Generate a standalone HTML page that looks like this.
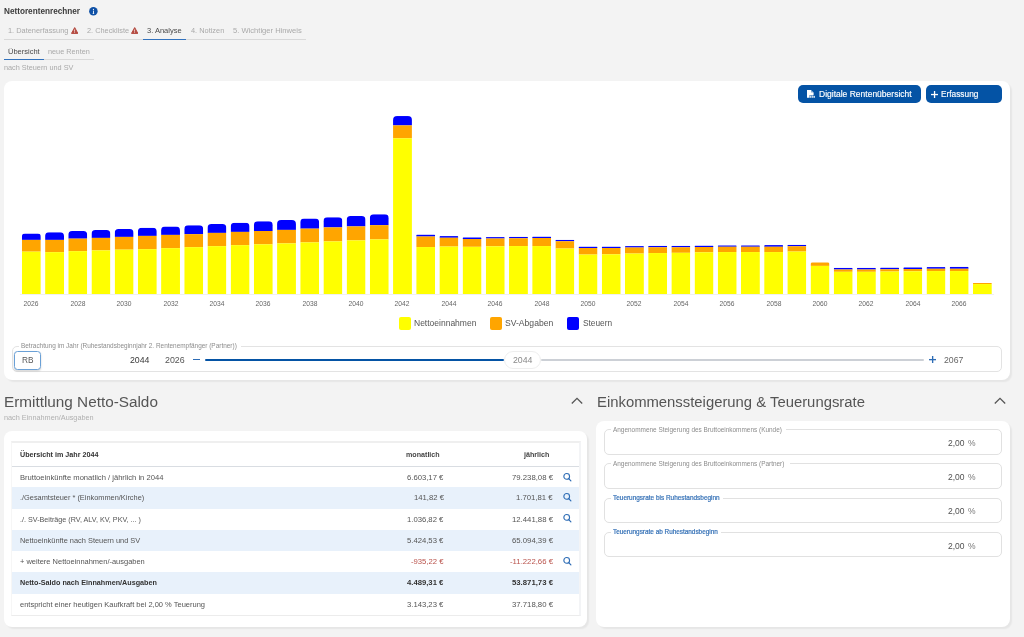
<!DOCTYPE html>
<html><head><meta charset="utf-8"><style>
html,body{margin:0;padding:0;}
body{width:1024px;height:637px;overflow:hidden;position:relative;background:#f3f3f3;font-family:"Liberation Sans",sans-serif;}
.t{position:absolute;white-space:nowrap;will-change:transform;}
</style></head><body>
<div class="t" style="left:3.75px;top:8.00px;font-size:8.2px;line-height:8.2px;font-weight:700;color:#3b3b3b;">Nettorentenrechner</div>
<svg style="position:absolute;left:89.3px;top:7.0px" width="9" height="9" viewBox="0 0 9 9"><circle cx="4.4" cy="4.3" r="4.25" fill="#0f51a6"/><rect x="4.0" y="3.6" width="0.85" height="3.2" fill="#fff"/><rect x="3.6" y="6.2" width="1.6" height="0.6" fill="#fff"/><circle cx="4.42" cy="2.4" r="0.55" fill="#fff"/></svg>
<div class="t" style="left:8.10px;top:27.00px;font-size:7.4px;line-height:7.4px;font-weight:400;color:#a9a9a9;">1. Datenerfassung</div>
<div class="t" style="left:86.90px;top:27.00px;font-size:7.35px;line-height:7.35px;font-weight:400;color:#a9a9a9;">2. Checkliste</div>
<div class="t" style="left:147.10px;top:27.00px;font-size:7.5px;line-height:7.5px;font-weight:400;color:#4b4b4b;">3. Analyse</div>
<div class="t" style="left:190.60px;top:27.00px;font-size:7.4px;line-height:7.4px;font-weight:400;color:#a9a9a9;">4. Notizen</div>
<div class="t" style="left:232.50px;top:27.00px;font-size:7.6px;line-height:7.6px;font-weight:400;color:#a9a9a9;">5. Wichtiger Hinweis</div>
<svg style="position:absolute;left:70.8px;top:26.9px" width="7.4" height="7" viewBox="0 0 7.4 7"><path d="M3.7 0.6 L6.9 6.4 L0.5 6.4 Z" fill="#b44a40" stroke="#b44a40" stroke-width="1" stroke-linejoin="round"/><rect x="3.35" y="2.5" width="0.7" height="2.2" fill="#fff"/><rect x="3.35" y="5.2" width="0.7" height="0.7" fill="#fff"/></svg>
<svg style="position:absolute;left:130.9px;top:26.9px" width="7.4" height="7" viewBox="0 0 7.4 7"><path d="M3.7 0.6 L6.9 6.4 L0.5 6.4 Z" fill="#b44a40" stroke="#b44a40" stroke-width="1" stroke-linejoin="round"/><rect x="3.35" y="2.5" width="0.7" height="2.2" fill="#fff"/><rect x="3.35" y="5.2" width="0.7" height="0.7" fill="#fff"/></svg>
<div style="position:absolute;left:3.75px;top:38.9px;width:302.5px;height:1px;background:#d9d9d9"></div>
<div style="position:absolute;left:142.9px;top:38.5px;width:43.1px;height:1.5px;background:#3272bd"></div>
<div class="t" style="left:7.75px;top:48.00px;font-size:7.5px;line-height:7.5px;font-weight:400;color:#4b4b4b;">Übersicht</div>
<div class="t" style="left:47.90px;top:48.00px;font-size:7.3px;line-height:7.3px;font-weight:400;color:#a9a9a9;">neue Renten</div>
<div style="position:absolute;left:3.5px;top:59.0px;width:90.25px;height:1px;background:#d9d9d9"></div>
<div style="position:absolute;left:3.5px;top:58.7px;width:40.25px;height:1.5px;background:#3272bd"></div>
<div class="t" style="left:3.50px;top:64.00px;font-size:7.3px;line-height:7.3px;font-weight:400;color:#aaaaaa;">nach Steuern und SV</div>
<div style="position:absolute;left:4px;top:81px;width:1006.2px;height:299px;background:#fff;border-radius:8px;box-shadow:2px 2px 1.5px rgba(0,0,0,0.055)"></div>
<div style="position:absolute;left:797.5px;top:85.2px;width:123.5px;height:17.9px;background:#0453a5;border-radius:5px"></div>
<div style="position:absolute;left:925.75px;top:85.2px;width:75.9px;height:17.9px;background:#0453a5;border-radius:5px"></div>
<svg style="position:absolute;left:807px;top:90px" width="9" height="8" viewBox="0 0 9 8"><path d="M0 0 H4 L6.6 2.6 V5.2 H2.4 V7.8 H0 Z" fill="#fff"/><path d="M4 0 V2.6 H6.6 Z" fill="#0453a5" opacity="0.45"/><rect x="2.6" y="5.6" width="1.5" height="2.2" fill="#fff" opacity="0.8"/><rect x="4.5" y="5.6" width="1.5" height="2.2" fill="#fff" opacity="0.8"/><rect x="6.4" y="5.9" width="1.5" height="1.9" fill="#fff" opacity="0.9"/></svg>
<div class="t" style="left:819.00px;top:90.00px;font-size:8.5px;line-height:8.5px;font-weight:400;color:#ffffff;-webkit-text-stroke:0.15px #fff">Digitale Rentenübersicht</div>
<svg style="position:absolute;left:931.4px;top:91.2px" width="7" height="7" viewBox="0 0 7 7"><rect x="2.9" y="0" width="1.3" height="7" fill="#fff"/><rect x="0" y="2.9" width="7" height="1.3" fill="#fff"/></svg>
<div class="t" style="left:941.00px;top:90.00px;font-size:8.3px;line-height:8.3px;font-weight:400;color:#ffffff;-webkit-text-stroke:0.15px #fff">Erfassung</div>
<svg style="position:absolute;left:0;top:0" width="1024" height="320" viewBox="0 0 1024 320"><rect x="19.9" y="294.00" width="974" height="0.6" fill="#e6e6e6"/><clipPath id="c0"><path d="M21.90,294.0 V236.70 Q21.90,233.50 25.10,233.50 H37.60 Q40.80,233.50 40.80,236.70 V294.0 Z"/></clipPath><g clip-path="url(#c0)"><rect x="21.90" y="233.50" width="18.9" height="6.40" fill="#0000ff"/><rect x="21.90" y="239.90" width="18.9" height="11.75" fill="#ffa500"/><rect x="21.90" y="251.65" width="18.9" height="42.35" fill="#ffff00"/></g><clipPath id="c1"><path d="M45.10,294.0 V236.07 Q45.10,232.25 48.92,232.25 H60.17 Q64.00,232.25 64.00,236.07 V294.0 Z"/></clipPath><g clip-path="url(#c1)"><rect x="45.10" y="232.25" width="18.9" height="7.65" fill="#0000ff"/><rect x="45.10" y="239.90" width="18.9" height="12.25" fill="#ffa500"/><rect x="45.10" y="252.15" width="18.9" height="41.85" fill="#ffff00"/></g><clipPath id="c2"><path d="M68.29,294.0 V234.82 Q68.29,231.00 72.12,231.00 H83.37 Q87.19,231.00 87.19,234.82 V294.0 Z"/></clipPath><g clip-path="url(#c2)"><rect x="68.29" y="231.00" width="18.9" height="7.65" fill="#0000ff"/><rect x="68.29" y="238.65" width="18.9" height="12.50" fill="#ffa500"/><rect x="68.29" y="251.15" width="18.9" height="42.85" fill="#ffff00"/></g><clipPath id="c3"><path d="M91.49,294.0 V233.95 Q91.49,230.00 95.44,230.00 H106.44 Q110.39,230.00 110.39,233.95 V294.0 Z"/></clipPath><g clip-path="url(#c3)"><rect x="91.49" y="230.00" width="18.9" height="7.90" fill="#0000ff"/><rect x="91.49" y="237.90" width="18.9" height="12.50" fill="#ffa500"/><rect x="91.49" y="250.40" width="18.9" height="43.60" fill="#ffff00"/></g><clipPath id="c4"><path d="M114.68,294.0 V232.95 Q114.68,229.00 118.63,229.00 H129.63 Q133.58,229.00 133.58,232.95 V294.0 Z"/></clipPath><g clip-path="url(#c4)"><rect x="114.68" y="229.00" width="18.9" height="7.90" fill="#0000ff"/><rect x="114.68" y="236.90" width="18.9" height="12.75" fill="#ffa500"/><rect x="114.68" y="249.65" width="18.9" height="44.35" fill="#ffff00"/></g><clipPath id="c5"><path d="M137.88,294.0 V231.75 Q137.88,227.75 141.88,227.75 H152.78 Q156.78,227.75 156.78,231.75 V294.0 Z"/></clipPath><g clip-path="url(#c5)"><rect x="137.88" y="227.75" width="18.9" height="8.15" fill="#0000ff"/><rect x="137.88" y="235.90" width="18.9" height="13.25" fill="#ffa500"/><rect x="137.88" y="249.15" width="18.9" height="44.85" fill="#ffff00"/></g><clipPath id="c6"><path d="M161.08,294.0 V230.50 Q161.08,226.50 165.08,226.50 H175.98 Q179.98,226.50 179.98,230.50 V294.0 Z"/></clipPath><g clip-path="url(#c6)"><rect x="161.08" y="226.50" width="18.9" height="8.40" fill="#0000ff"/><rect x="161.08" y="234.90" width="18.9" height="13.25" fill="#ffa500"/><rect x="161.08" y="248.15" width="18.9" height="45.85" fill="#ffff00"/></g><clipPath id="c7"><path d="M184.27,294.0 V229.25 Q184.27,225.25 188.27,225.25 H199.17 Q203.17,225.25 203.17,229.25 V294.0 Z"/></clipPath><g clip-path="url(#c7)"><rect x="184.27" y="225.25" width="18.9" height="8.90" fill="#0000ff"/><rect x="184.27" y="234.15" width="18.9" height="13.00" fill="#ffa500"/><rect x="184.27" y="247.15" width="18.9" height="46.85" fill="#ffff00"/></g><clipPath id="c8"><path d="M207.47,294.0 V228.00 Q207.47,224.00 211.47,224.00 H222.37 Q226.37,224.00 226.37,228.00 V294.0 Z"/></clipPath><g clip-path="url(#c8)"><rect x="207.47" y="224.00" width="18.9" height="8.90" fill="#0000ff"/><rect x="207.47" y="232.90" width="18.9" height="13.25" fill="#ffa500"/><rect x="207.47" y="246.15" width="18.9" height="47.85" fill="#ffff00"/></g><clipPath id="c9"><path d="M230.66,294.0 V226.75 Q230.66,222.75 234.66,222.75 H245.56 Q249.56,222.75 249.56,226.75 V294.0 Z"/></clipPath><g clip-path="url(#c9)"><rect x="230.66" y="222.75" width="18.9" height="9.15" fill="#0000ff"/><rect x="230.66" y="231.90" width="18.9" height="13.25" fill="#ffa500"/><rect x="230.66" y="245.15" width="18.9" height="48.85" fill="#ffff00"/></g><clipPath id="c10"><path d="M253.86,294.0 V225.25 Q253.86,221.25 257.86,221.25 H268.76 Q272.76,221.25 272.76,225.25 V294.0 Z"/></clipPath><g clip-path="url(#c10)"><rect x="253.86" y="221.25" width="18.9" height="9.75" fill="#0000ff"/><rect x="253.86" y="231.00" width="18.9" height="13.30" fill="#ffa500"/><rect x="253.86" y="244.30" width="18.9" height="49.70" fill="#ffff00"/></g><clipPath id="c11"><path d="M277.06,294.0 V224.00 Q277.06,220.00 281.06,220.00 H291.96 Q295.96,220.00 295.96,224.00 V294.0 Z"/></clipPath><g clip-path="url(#c11)"><rect x="277.06" y="220.00" width="18.9" height="9.90" fill="#0000ff"/><rect x="277.06" y="229.90" width="18.9" height="13.50" fill="#ffa500"/><rect x="277.06" y="243.40" width="18.9" height="50.60" fill="#ffff00"/></g><clipPath id="c12"><path d="M300.25,294.0 V222.50 Q300.25,218.50 304.25,218.50 H315.15 Q319.15,218.50 319.15,222.50 V294.0 Z"/></clipPath><g clip-path="url(#c12)"><rect x="300.25" y="218.50" width="18.9" height="10.15" fill="#0000ff"/><rect x="300.25" y="228.65" width="18.9" height="13.75" fill="#ffa500"/><rect x="300.25" y="242.40" width="18.9" height="51.60" fill="#ffff00"/></g><clipPath id="c13"><path d="M323.45,294.0 V221.25 Q323.45,217.25 327.45,217.25 H338.35 Q342.35,217.25 342.35,221.25 V294.0 Z"/></clipPath><g clip-path="url(#c13)"><rect x="323.45" y="217.25" width="18.9" height="10.15" fill="#0000ff"/><rect x="323.45" y="227.40" width="18.9" height="14.00" fill="#ffa500"/><rect x="323.45" y="241.40" width="18.9" height="52.60" fill="#ffff00"/></g><clipPath id="c14"><path d="M346.64,294.0 V220.00 Q346.64,216.00 350.64,216.00 H361.54 Q365.54,216.00 365.54,220.00 V294.0 Z"/></clipPath><g clip-path="url(#c14)"><rect x="346.64" y="216.00" width="18.9" height="10.40" fill="#0000ff"/><rect x="346.64" y="226.40" width="18.9" height="14.00" fill="#ffa500"/><rect x="346.64" y="240.40" width="18.9" height="53.60" fill="#ffff00"/></g><clipPath id="c15"><path d="M369.84,294.0 V218.25 Q369.84,214.25 373.84,214.25 H384.74 Q388.74,214.25 388.74,218.25 V294.0 Z"/></clipPath><g clip-path="url(#c15)"><rect x="369.84" y="214.25" width="18.9" height="10.90" fill="#0000ff"/><rect x="369.84" y="225.15" width="18.9" height="14.25" fill="#ffa500"/><rect x="369.84" y="239.40" width="18.9" height="54.60" fill="#ffff00"/></g><clipPath id="c16"><path d="M393.04,294.0 V120.05 Q393.04,116.05 397.04,116.05 H407.94 Q411.94,116.05 411.94,120.05 V294.0 Z"/></clipPath><g clip-path="url(#c16)"><rect x="393.04" y="116.05" width="18.9" height="9.35" fill="#0000ff"/><rect x="393.04" y="125.40" width="18.9" height="12.90" fill="#ffa500"/><rect x="393.04" y="138.30" width="18.9" height="155.70" fill="#ffff00"/></g><clipPath id="c17"><path d="M416.23,294.0 V235.55 Q416.23,234.60 417.18,234.60 H434.18 Q435.13,234.60 435.13,235.55 V294.0 Z"/></clipPath><g clip-path="url(#c17)"><rect x="416.23" y="234.60" width="18.9" height="1.90" fill="#0000ff"/><rect x="416.23" y="236.50" width="18.9" height="10.55" fill="#ffa500"/><rect x="416.23" y="247.05" width="18.9" height="46.95" fill="#ffff00"/></g><clipPath id="c18"><path d="M439.43,294.0 V236.93 Q439.43,236.10 440.25,236.10 H457.50 Q458.33,236.10 458.33,236.93 V294.0 Z"/></clipPath><g clip-path="url(#c18)"><rect x="439.43" y="236.10" width="18.9" height="1.65" fill="#0000ff"/><rect x="439.43" y="237.75" width="18.9" height="8.80" fill="#ffa500"/><rect x="439.43" y="246.55" width="18.9" height="47.45" fill="#ffff00"/></g><clipPath id="c19"><path d="M462.62,294.0 V238.18 Q462.62,237.35 463.45,237.35 H480.70 Q481.52,237.35 481.52,238.18 V294.0 Z"/></clipPath><g clip-path="url(#c19)"><rect x="462.62" y="237.35" width="18.9" height="1.65" fill="#0000ff"/><rect x="462.62" y="239.00" width="18.9" height="7.80" fill="#ffa500"/><rect x="462.62" y="246.80" width="18.9" height="47.20" fill="#ffff00"/></g><clipPath id="c20"><path d="M485.82,294.0 V237.80 Q485.82,237.10 486.52,237.10 H504.02 Q504.72,237.10 504.72,237.80 V294.0 Z"/></clipPath><g clip-path="url(#c20)"><rect x="485.82" y="237.10" width="18.9" height="1.40" fill="#0000ff"/><rect x="485.82" y="238.50" width="18.9" height="7.80" fill="#ffa500"/><rect x="485.82" y="246.30" width="18.9" height="47.70" fill="#ffff00"/></g><clipPath id="c21"><path d="M509.02,294.0 V237.55 Q509.02,236.85 509.72,236.85 H527.22 Q527.92,236.85 527.92,237.55 V294.0 Z"/></clipPath><g clip-path="url(#c21)"><rect x="509.02" y="236.85" width="18.9" height="1.40" fill="#0000ff"/><rect x="509.02" y="238.25" width="18.9" height="7.80" fill="#ffa500"/><rect x="509.02" y="246.05" width="18.9" height="47.95" fill="#ffff00"/></g><clipPath id="c22"><path d="M532.21,294.0 V237.30 Q532.21,236.60 532.91,236.60 H550.41 Q551.11,236.60 551.11,237.30 V294.0 Z"/></clipPath><g clip-path="url(#c22)"><rect x="532.21" y="236.60" width="18.9" height="1.40" fill="#0000ff"/><rect x="532.21" y="238.00" width="18.9" height="8.05" fill="#ffa500"/><rect x="532.21" y="246.05" width="18.9" height="47.95" fill="#ffff00"/></g><clipPath id="c23"><path d="M555.41,294.0 V240.55 Q555.41,239.85 556.11,239.85 H573.61 Q574.31,239.85 574.31,240.55 V294.0 Z"/></clipPath><g clip-path="url(#c23)"><rect x="555.41" y="239.85" width="18.9" height="1.40" fill="#0000ff"/><rect x="555.41" y="241.25" width="18.9" height="7.30" fill="#ffa500"/><rect x="555.41" y="248.55" width="18.9" height="45.45" fill="#ffff00"/></g><clipPath id="c24"><path d="M578.60,294.0 V247.30 Q578.60,246.60 579.30,246.60 H596.80 Q597.50,246.60 597.50,247.30 V294.0 Z"/></clipPath><g clip-path="url(#c24)"><rect x="578.60" y="246.60" width="18.9" height="1.40" fill="#0000ff"/><rect x="578.60" y="248.00" width="18.9" height="6.55" fill="#ffa500"/><rect x="578.60" y="254.55" width="18.9" height="39.45" fill="#ffff00"/></g><clipPath id="c25"><path d="M601.80,294.0 V247.30 Q601.80,246.60 602.50,246.60 H620.00 Q620.70,246.60 620.70,247.30 V294.0 Z"/></clipPath><g clip-path="url(#c25)"><rect x="601.80" y="246.60" width="18.9" height="1.40" fill="#0000ff"/><rect x="601.80" y="248.00" width="18.9" height="6.30" fill="#ffa500"/><rect x="601.80" y="254.30" width="18.9" height="39.70" fill="#ffff00"/></g><clipPath id="c26"><path d="M625.00,294.0 V246.80 Q625.00,246.10 625.70,246.10 H643.20 Q643.90,246.10 643.90,246.80 V294.0 Z"/></clipPath><g clip-path="url(#c26)"><rect x="625.00" y="246.10" width="18.9" height="1.40" fill="#0000ff"/><rect x="625.00" y="247.50" width="18.9" height="6.05" fill="#ffa500"/><rect x="625.00" y="253.55" width="18.9" height="40.45" fill="#ffff00"/></g><clipPath id="c27"><path d="M648.19,294.0 V246.55 Q648.19,245.85 648.89,245.85 H666.39 Q667.09,245.85 667.09,246.55 V294.0 Z"/></clipPath><g clip-path="url(#c27)"><rect x="648.19" y="245.85" width="18.9" height="1.40" fill="#0000ff"/><rect x="648.19" y="247.25" width="18.9" height="5.80" fill="#ffa500"/><rect x="648.19" y="253.05" width="18.9" height="40.95" fill="#ffff00"/></g><clipPath id="c28"><path d="M671.39,294.0 V246.55 Q671.39,245.85 672.09,245.85 H689.59 Q690.29,245.85 690.29,246.55 V294.0 Z"/></clipPath><g clip-path="url(#c28)"><rect x="671.39" y="245.85" width="18.9" height="1.40" fill="#0000ff"/><rect x="671.39" y="247.25" width="18.9" height="5.55" fill="#ffa500"/><rect x="671.39" y="252.80" width="18.9" height="41.20" fill="#ffff00"/></g><clipPath id="c29"><path d="M694.58,294.0 V246.30 Q694.58,245.60 695.28,245.60 H712.78 Q713.48,245.60 713.48,246.30 V294.0 Z"/></clipPath><g clip-path="url(#c29)"><rect x="694.58" y="245.60" width="18.9" height="1.40" fill="#0000ff"/><rect x="694.58" y="247.00" width="18.9" height="5.30" fill="#ffa500"/><rect x="694.58" y="252.30" width="18.9" height="41.70" fill="#ffff00"/></g><clipPath id="c30"><path d="M717.78,294.0 V246.05 Q717.78,245.35 718.48,245.35 H735.98 Q736.68,245.35 736.68,246.05 V294.0 Z"/></clipPath><g clip-path="url(#c30)"><rect x="717.78" y="245.35" width="18.9" height="1.40" fill="#0000ff"/><rect x="717.78" y="246.75" width="18.9" height="5.30" fill="#ffa500"/><rect x="717.78" y="252.05" width="18.9" height="41.95" fill="#ffff00"/></g><clipPath id="c31"><path d="M740.98,294.0 V246.05 Q740.98,245.35 741.68,245.35 H759.18 Q759.88,245.35 759.88,246.05 V294.0 Z"/></clipPath><g clip-path="url(#c31)"><rect x="740.98" y="245.35" width="18.9" height="1.40" fill="#0000ff"/><rect x="740.98" y="246.75" width="18.9" height="5.30" fill="#ffa500"/><rect x="740.98" y="252.05" width="18.9" height="41.95" fill="#ffff00"/></g><clipPath id="c32"><path d="M764.17,294.0 V245.93 Q764.17,245.10 765.00,245.10 H782.25 Q783.07,245.10 783.07,245.93 V294.0 Z"/></clipPath><g clip-path="url(#c32)"><rect x="764.17" y="245.10" width="18.9" height="1.65" fill="#0000ff"/><rect x="764.17" y="246.75" width="18.9" height="5.30" fill="#ffa500"/><rect x="764.17" y="252.05" width="18.9" height="41.95" fill="#ffff00"/></g><clipPath id="c33"><path d="M787.37,294.0 V245.55 Q787.37,244.85 788.07,244.85 H805.57 Q806.27,244.85 806.27,245.55 V294.0 Z"/></clipPath><g clip-path="url(#c33)"><rect x="787.37" y="244.85" width="18.9" height="1.40" fill="#0000ff"/><rect x="787.37" y="246.25" width="18.9" height="5.30" fill="#ffa500"/><rect x="787.37" y="251.55" width="18.9" height="42.45" fill="#ffff00"/></g><clipPath id="c34"><path d="M810.56,294.0 V264.12 Q810.56,262.35 812.34,262.35 H827.69 Q829.46,262.35 829.46,264.12 V294.0 Z"/></clipPath><g clip-path="url(#c34)"><rect x="810.56" y="262.35" width="18.9" height="0.00" fill="#0000ff"/><rect x="810.56" y="262.35" width="18.9" height="3.55" fill="#ffa500"/><rect x="810.56" y="265.90" width="18.9" height="28.10" fill="#ffff00"/></g><clipPath id="c35"><path d="M833.76,294.0 V268.68 Q833.76,267.85 834.59,267.85 H851.84 Q852.66,267.85 852.66,268.68 V294.0 Z"/></clipPath><g clip-path="url(#c35)"><rect x="833.76" y="267.85" width="18.9" height="1.65" fill="#0000ff"/><rect x="833.76" y="269.50" width="18.9" height="2.30" fill="#ffa500"/><rect x="833.76" y="271.80" width="18.9" height="22.20" fill="#ffff00"/></g><clipPath id="c36"><path d="M856.96,294.0 V268.68 Q856.96,267.85 857.78,267.85 H875.03 Q875.86,267.85 875.86,268.68 V294.0 Z"/></clipPath><g clip-path="url(#c36)"><rect x="856.96" y="267.85" width="18.9" height="1.65" fill="#0000ff"/><rect x="856.96" y="269.50" width="18.9" height="2.30" fill="#ffa500"/><rect x="856.96" y="271.80" width="18.9" height="22.20" fill="#ffff00"/></g><clipPath id="c37"><path d="M880.15,294.0 V268.43 Q880.15,267.60 880.98,267.60 H898.23 Q899.05,267.60 899.05,268.43 V294.0 Z"/></clipPath><g clip-path="url(#c37)"><rect x="880.15" y="267.60" width="18.9" height="1.65" fill="#0000ff"/><rect x="880.15" y="269.25" width="18.9" height="2.30" fill="#ffa500"/><rect x="880.15" y="271.55" width="18.9" height="22.45" fill="#ffff00"/></g><clipPath id="c38"><path d="M903.35,294.0 V268.18 Q903.35,267.35 904.17,267.35 H921.42 Q922.25,267.35 922.25,268.18 V294.0 Z"/></clipPath><g clip-path="url(#c38)"><rect x="903.35" y="267.35" width="18.9" height="1.65" fill="#0000ff"/><rect x="903.35" y="269.00" width="18.9" height="2.30" fill="#ffa500"/><rect x="903.35" y="271.30" width="18.9" height="22.70" fill="#ffff00"/></g><clipPath id="c39"><path d="M926.54,294.0 V267.93 Q926.54,267.10 927.37,267.10 H944.62 Q945.44,267.10 945.44,267.93 V294.0 Z"/></clipPath><g clip-path="url(#c39)"><rect x="926.54" y="267.10" width="18.9" height="1.65" fill="#0000ff"/><rect x="926.54" y="268.75" width="18.9" height="2.30" fill="#ffa500"/><rect x="926.54" y="271.05" width="18.9" height="22.95" fill="#ffff00"/></g><clipPath id="c40"><path d="M949.74,294.0 V267.80 Q949.74,266.85 950.69,266.85 H967.69 Q968.64,266.85 968.64,267.80 V294.0 Z"/></clipPath><g clip-path="url(#c40)"><rect x="949.74" y="266.85" width="18.9" height="1.90" fill="#0000ff"/><rect x="949.74" y="268.75" width="18.9" height="2.30" fill="#ffa500"/><rect x="949.74" y="271.05" width="18.9" height="22.95" fill="#ffff00"/></g><clipPath id="c41"><path d="M972.94,294.0 V283.52 Q972.94,283.00 973.46,283.00 H991.31 Q991.84,283.00 991.84,283.52 V294.0 Z"/></clipPath><g clip-path="url(#c41)"><rect x="972.94" y="283.00" width="18.9" height="0.00" fill="#0000ff"/><rect x="972.94" y="283.00" width="18.9" height="1.05" fill="#ffa500"/><rect x="972.94" y="284.05" width="18.9" height="9.95" fill="#ffff00"/></g></svg>
<div class="t" style="left:-168.65px;width:400px;text-align:center;top:301.00px;font-size:6.7px;line-height:6.7px;font-weight:400;color:#666666;">2026</div>
<div class="t" style="left:-122.26px;width:400px;text-align:center;top:301.00px;font-size:6.7px;line-height:6.7px;font-weight:400;color:#666666;">2028</div>
<div class="t" style="left:-75.87px;width:400px;text-align:center;top:301.00px;font-size:6.7px;line-height:6.7px;font-weight:400;color:#666666;">2030</div>
<div class="t" style="left:-29.47px;width:400px;text-align:center;top:301.00px;font-size:6.7px;line-height:6.7px;font-weight:400;color:#666666;">2032</div>
<div class="t" style="left:16.92px;width:400px;text-align:center;top:301.00px;font-size:6.7px;line-height:6.7px;font-weight:400;color:#666666;">2034</div>
<div class="t" style="left:63.31px;width:400px;text-align:center;top:301.00px;font-size:6.7px;line-height:6.7px;font-weight:400;color:#666666;">2036</div>
<div class="t" style="left:109.70px;width:400px;text-align:center;top:301.00px;font-size:6.7px;line-height:6.7px;font-weight:400;color:#666666;">2038</div>
<div class="t" style="left:156.09px;width:400px;text-align:center;top:301.00px;font-size:6.7px;line-height:6.7px;font-weight:400;color:#666666;">2040</div>
<div class="t" style="left:202.49px;width:400px;text-align:center;top:301.00px;font-size:6.7px;line-height:6.7px;font-weight:400;color:#666666;">2042</div>
<div class="t" style="left:248.88px;width:400px;text-align:center;top:301.00px;font-size:6.7px;line-height:6.7px;font-weight:400;color:#666666;">2044</div>
<div class="t" style="left:295.27px;width:400px;text-align:center;top:301.00px;font-size:6.7px;line-height:6.7px;font-weight:400;color:#666666;">2046</div>
<div class="t" style="left:341.66px;width:400px;text-align:center;top:301.00px;font-size:6.7px;line-height:6.7px;font-weight:400;color:#666666;">2048</div>
<div class="t" style="left:388.05px;width:400px;text-align:center;top:301.00px;font-size:6.7px;line-height:6.7px;font-weight:400;color:#666666;">2050</div>
<div class="t" style="left:434.45px;width:400px;text-align:center;top:301.00px;font-size:6.7px;line-height:6.7px;font-weight:400;color:#666666;">2052</div>
<div class="t" style="left:480.84px;width:400px;text-align:center;top:301.00px;font-size:6.7px;line-height:6.7px;font-weight:400;color:#666666;">2054</div>
<div class="t" style="left:527.23px;width:400px;text-align:center;top:301.00px;font-size:6.7px;line-height:6.7px;font-weight:400;color:#666666;">2056</div>
<div class="t" style="left:573.62px;width:400px;text-align:center;top:301.00px;font-size:6.7px;line-height:6.7px;font-weight:400;color:#666666;">2058</div>
<div class="t" style="left:620.01px;width:400px;text-align:center;top:301.00px;font-size:6.7px;line-height:6.7px;font-weight:400;color:#666666;">2060</div>
<div class="t" style="left:666.41px;width:400px;text-align:center;top:301.00px;font-size:6.7px;line-height:6.7px;font-weight:400;color:#666666;">2062</div>
<div class="t" style="left:712.80px;width:400px;text-align:center;top:301.00px;font-size:6.7px;line-height:6.7px;font-weight:400;color:#666666;">2064</div>
<div class="t" style="left:759.19px;width:400px;text-align:center;top:301.00px;font-size:6.7px;line-height:6.7px;font-weight:400;color:#666666;">2066</div>
<div style="position:absolute;left:398.5px;top:317.4px;width:12.2px;height:12.2px;background:#ffff00;border-radius:2px"></div>
<div class="t" style="left:413.75px;top:319.00px;font-size:8.5px;line-height:8.5px;font-weight:400;color:#555;">Nettoeinnahmen</div>
<div style="position:absolute;left:490.0px;top:317.4px;width:12.0px;height:12.2px;background:#ffa500;border-radius:2px"></div>
<div class="t" style="left:505.25px;top:319.00px;font-size:8.6px;line-height:8.6px;font-weight:400;color:#555;">SV-Abgaben</div>
<div style="position:absolute;left:567.2px;top:317.4px;width:12.1px;height:12.2px;background:#0000ff;border-radius:2px"></div>
<div class="t" style="left:582.50px;top:319.00px;font-size:8.3px;line-height:8.3px;font-weight:400;color:#555;">Steuern</div>
<div style="position:absolute;left:11.9px;top:345.8px;width:990px;height:26.1px;border:1px solid #e3e3e3;border-radius:5px;box-sizing:border-box"></div>
<div style="position:absolute;left:18.5px;top:343px;width:222px;height:5px;background:#fff"></div>
<div class="t" style="left:20.60px;top:343.00px;font-size:6.45px;line-height:6.45px;font-weight:400;color:#8c8c8c;">Betrachtung im Jahr (Ruhestandsbeginnjahr 2. Rentenempfänger (Partner))</div>
<div style="position:absolute;left:14.3px;top:350.8px;width:26.5px;height:18.9px;border:1.8px solid #6aa0d6;border-radius:3.5px;box-sizing:border-box;background:#fff;box-shadow:0 1px 2px rgba(0,0,0,0.18)"></div>
<div class="t" style="left:21.80px;top:356.00px;font-size:8.3px;line-height:8.3px;font-weight:400;color:#585858;">RB</div>
<div class="t" style="left:130.25px;top:356.00px;font-size:8.75px;line-height:8.75px;font-weight:400;color:#3a3a3a;">2044</div>
<div class="t" style="left:165.25px;top:356.00px;font-size:8.85px;line-height:8.85px;font-weight:400;color:#555;">2026</div>
<div style="position:absolute;left:192.5px;top:359.1px;width:7px;height:1.2px;background:#2d6cb5"></div>
<div style="position:absolute;left:205px;top:359px;width:299px;height:2.4px;background:#0453a5;border-radius:1px"></div>
<div style="position:absolute;left:541px;top:359px;width:382.5px;height:2.4px;background:#ccd0d6;border-radius:1px"></div>
<div style="position:absolute;left:504px;top:351.25px;width:37px;height:17.5px;border:1px solid #eeeeee;border-radius:9px;box-sizing:border-box;background:#fff"></div>
<div class="t" style="left:512.75px;top:356.00px;font-size:8.75px;line-height:8.75px;font-weight:400;color:#8a8a8a;">2044</div>
<svg style="position:absolute;left:929px;top:356px" width="7.2" height="7.2" viewBox="0 0 7 7"><rect x="2.9" y="0" width="1.3" height="7" fill="#2d6cb5"/><rect x="0" y="2.9" width="7" height="1.3" fill="#2d6cb5"/></svg>
<div class="t" style="left:943.90px;top:356.00px;font-size:8.7px;line-height:8.7px;font-weight:400;color:#666;">2067</div>
<div class="t" style="left:4.00px;top:394.00px;font-size:15.3px;line-height:15.3px;font-weight:400;color:#555555;">Ermittlung Netto-Saldo</div>
<div class="t" style="left:3.75px;top:414.00px;font-size:7.3px;line-height:7.3px;font-weight:400;color:#b0b0b0;">nach Einnahmen/Ausgaben</div>
<svg style="position:absolute;left:570.6px;top:397.0px" width="12" height="8" viewBox="0 0 12 8"><path d="M0.8 6.5 L6 1.3 L11.2 6.5" fill="none" stroke="#555" stroke-width="1.3"/></svg>
<div class="t" style="left:596.50px;top:395.00px;font-size:14.85px;line-height:14.85px;font-weight:400;color:#555555;">Einkommenssteigerung &amp; Teuerungsrate</div>
<svg style="position:absolute;left:993.7px;top:397.0px" width="12" height="8" viewBox="0 0 12 8"><path d="M0.8 6.5 L6 1.3 L11.2 6.5" fill="none" stroke="#555" stroke-width="1.3"/></svg>
<div style="position:absolute;left:4.4px;top:431px;width:582.6px;height:196.4px;background:#fff;border-radius:8px;box-shadow:2px 2px 1.5px rgba(0,0,0,0.055)"></div>
<div style="position:absolute;left:11px;top:441px;width:569.5px;height:175px;box-sizing:border-box;border-top:2px solid #efefef;border-left:1px solid #f6f6f6;border-right:2px solid #f3f4f6;border-bottom:1.5px solid #ececec;background:#fff"></div>
<div style="position:absolute;left:12px;top:465.6px;width:567px;height:1.3px;background:#d9dde2"></div>
<div style="position:absolute;left:12px;top:487.3px;width:567px;height:21.30000000000001px;background:#e8f1fb"></div>
<div style="position:absolute;left:12px;top:530.0px;width:567px;height:21.299999999999955px;background:#e8f1fb"></div>
<div style="position:absolute;left:12px;top:572.1px;width:567px;height:21.799999999999955px;background:#e8f1fb"></div>
<div class="t" style="left:19.50px;top:452.00px;font-size:7.17px;line-height:7.17px;font-weight:700;color:#333;">Übersicht im Jahr 2044</div>
<div class="t" style="right:584.40px;top:452.00px;font-size:7.14px;line-height:7.14px;font-weight:700;color:#444;">monatlich</div>
<div class="t" style="right:475.00px;top:452.00px;font-size:7.17px;line-height:7.17px;font-weight:700;color:#444;">jährlich</div>
<div class="t" style="left:19.50px;top:474.00px;font-size:7.62px;line-height:7.62px;font-weight:400;color:#555;">Bruttoeinkünfte monatlich / jährlich in 2044</div>
<div class="t" style="right:580.25px;top:474.00px;font-size:7.7px;line-height:7.7px;font-weight:400;color:#555;">6.603,17 €</div>
<div class="t" style="right:470.90px;top:474.00px;font-size:7.75px;line-height:7.75px;font-weight:400;color:#555;">79.238,08 €</div>
<svg style="position:absolute;left:562.6px;top:472.50px" width="9" height="9" viewBox="0 0 9 9"><circle cx="3.7" cy="3.4" r="2.85" fill="none" stroke="#2d6cb5" stroke-width="1.1"/><path d="M5.8 5.6 L7.9 7.9" stroke="#2d6cb5" stroke-width="1.2" stroke-linecap="round"/></svg>
<div class="t" style="left:19.50px;top:494.00px;font-size:7.38px;line-height:7.38px;font-weight:400;color:#555;">./Gesamtsteuer * (Einkommen/Kirche)</div>
<div class="t" style="right:580.25px;top:494.00px;font-size:7.7px;line-height:7.7px;font-weight:400;color:#555;">141,82 €</div>
<div class="t" style="right:470.90px;top:494.00px;font-size:7.75px;line-height:7.75px;font-weight:400;color:#555;">1.701,81 €</div>
<svg style="position:absolute;left:562.6px;top:492.90px" width="9" height="9" viewBox="0 0 9 9"><circle cx="3.7" cy="3.4" r="2.85" fill="none" stroke="#2d6cb5" stroke-width="1.1"/><path d="M5.8 5.6 L7.9 7.9" stroke="#2d6cb5" stroke-width="1.2" stroke-linecap="round"/></svg>
<div class="t" style="left:19.50px;top:516.00px;font-size:7.19px;line-height:7.19px;font-weight:400;color:#555;">./. SV-Beiträge (RV, ALV, KV, PKV, ... )</div>
<div class="t" style="right:580.25px;top:516.00px;font-size:7.7px;line-height:7.7px;font-weight:400;color:#555;">1.036,82 €</div>
<div class="t" style="right:470.90px;top:516.00px;font-size:7.75px;line-height:7.75px;font-weight:400;color:#555;">12.441,88 €</div>
<svg style="position:absolute;left:562.6px;top:514.20px" width="9" height="9" viewBox="0 0 9 9"><circle cx="3.7" cy="3.4" r="2.85" fill="none" stroke="#2d6cb5" stroke-width="1.1"/><path d="M5.8 5.6 L7.9 7.9" stroke="#2d6cb5" stroke-width="1.2" stroke-linecap="round"/></svg>
<div class="t" style="left:19.50px;top:537.00px;font-size:7.42px;line-height:7.42px;font-weight:400;color:#555;">Nettoeinkünfte nach Steuern und SV</div>
<div class="t" style="right:580.25px;top:537.00px;font-size:7.7px;line-height:7.7px;font-weight:400;color:#555;">5.424,53 €</div>
<div class="t" style="right:470.90px;top:537.00px;font-size:7.75px;line-height:7.75px;font-weight:400;color:#555;">65.094,39 €</div>
<div class="t" style="left:19.50px;top:558.00px;font-size:7.48px;line-height:7.48px;font-weight:400;color:#555;">+ weitere Nettoeinnahmen/-ausgaben</div>
<div class="t" style="right:580.25px;top:558.00px;font-size:7.7px;line-height:7.7px;font-weight:400;color:#b9534c;">-935,22 €</div>
<div class="t" style="right:470.90px;top:558.00px;font-size:7.75px;line-height:7.75px;font-weight:400;color:#b9534c;">-11.222,66 €</div>
<svg style="position:absolute;left:562.6px;top:556.90px" width="9" height="9" viewBox="0 0 9 9"><circle cx="3.7" cy="3.4" r="2.85" fill="none" stroke="#2d6cb5" stroke-width="1.1"/><path d="M5.8 5.6 L7.9 7.9" stroke="#2d6cb5" stroke-width="1.2" stroke-linecap="round"/></svg>
<div class="t" style="left:19.50px;top:579.00px;font-size:7.21px;line-height:7.21px;font-weight:700;color:#333;">Netto-Saldo nach Einnahmen/Ausgaben</div>
<div class="t" style="right:580.25px;top:579.00px;font-size:7.7px;line-height:7.7px;font-weight:700;color:#333;">4.489,31 €</div>
<div class="t" style="right:470.90px;top:579.00px;font-size:7.75px;line-height:7.75px;font-weight:700;color:#333;">53.871,73 €</div>
<div class="t" style="left:19.50px;top:601.00px;font-size:7.5px;line-height:7.5px;font-weight:400;color:#555;">entspricht einer heutigen Kaufkraft bei 2,00 % Teuerung</div>
<div class="t" style="right:580.25px;top:601.00px;font-size:7.7px;line-height:7.7px;font-weight:400;color:#555;">3.143,23 €</div>
<div class="t" style="right:470.90px;top:601.00px;font-size:7.75px;line-height:7.75px;font-weight:400;color:#555;">37.718,80 €</div>
<div style="position:absolute;left:595.6px;top:421px;width:414.6px;height:206.2px;background:#fff;border-radius:8px;box-shadow:2px 2px 1.5px rgba(0,0,0,0.055)"></div>
<div style="position:absolute;left:604.4px;top:429.2px;width:397.3px;height:25.6px;border:1px solid #e1e1e1;border-radius:5px;box-sizing:border-box"></div>
<div style="position:absolute;left:610.5px;top:426.2px;width:175.3px;height:5px;background:#fff"></div>
<div class="t" style="left:613.30px;top:427.00px;font-size:6.45px;line-height:6.45px;font-weight:400;color:#8c8c8c;">Angenommene Steigerung des Bruttoeinkommens (Kunde)</div>
<div class="t" style="right:59.00px;top:439.00px;font-size:8.5px;line-height:8.5px;font-weight:400;color:#505050;">2,00</div>
<div class="t" style="left:967.90px;top:439.00px;font-size:8.5px;line-height:8.5px;font-weight:400;color:#777;">%</div>
<div style="position:absolute;left:604.4px;top:463.1px;width:397.3px;height:25.6px;border:1px solid #e1e1e1;border-radius:5px;box-sizing:border-box"></div>
<div style="position:absolute;left:610.5px;top:460.1px;width:179.5px;height:5px;background:#fff"></div>
<div class="t" style="left:613.30px;top:461.00px;font-size:6.45px;line-height:6.45px;font-weight:400;color:#8c8c8c;">Angenommene Steigerung des Bruttoeinkommens (Partner)</div>
<div class="t" style="right:59.00px;top:473.00px;font-size:8.5px;line-height:8.5px;font-weight:400;color:#505050;">2,00</div>
<div class="t" style="left:967.90px;top:473.00px;font-size:8.5px;line-height:8.5px;font-weight:400;color:#777;">%</div>
<div style="position:absolute;left:604.4px;top:497.5px;width:397.3px;height:25.6px;border:1px solid #e1e1e1;border-radius:5px;box-sizing:border-box"></div>
<div style="position:absolute;left:610.5px;top:494.5px;width:112.8px;height:5px;background:#fff"></div>
<div class="t" style="left:613.30px;top:495.00px;font-size:6.45px;line-height:6.45px;font-weight:400;color:#3470b6;-webkit-text-stroke:0.2px #3470b6">Teuerungsrate bis Ruhestandsbeginn</div>
<div class="t" style="right:59.00px;top:507.00px;font-size:8.5px;line-height:8.5px;font-weight:400;color:#505050;">2,00</div>
<div class="t" style="left:967.90px;top:507.00px;font-size:8.5px;line-height:8.5px;font-weight:400;color:#777;">%</div>
<div style="position:absolute;left:604.4px;top:531.9px;width:397.3px;height:25.6px;border:1px solid #e1e1e1;border-radius:5px;box-sizing:border-box"></div>
<div style="position:absolute;left:610.5px;top:528.9px;width:110.5px;height:5px;background:#fff"></div>
<div class="t" style="left:613.30px;top:529.00px;font-size:6.4px;line-height:6.4px;font-weight:400;color:#3470b6;-webkit-text-stroke:0.2px #3470b6">Teuerungsrate ab Ruhestandsbeginn</div>
<div class="t" style="right:59.00px;top:542.00px;font-size:8.5px;line-height:8.5px;font-weight:400;color:#505050;">2,00</div>
<div class="t" style="left:967.90px;top:542.00px;font-size:8.5px;line-height:8.5px;font-weight:400;color:#777;">%</div>
</body></html>
